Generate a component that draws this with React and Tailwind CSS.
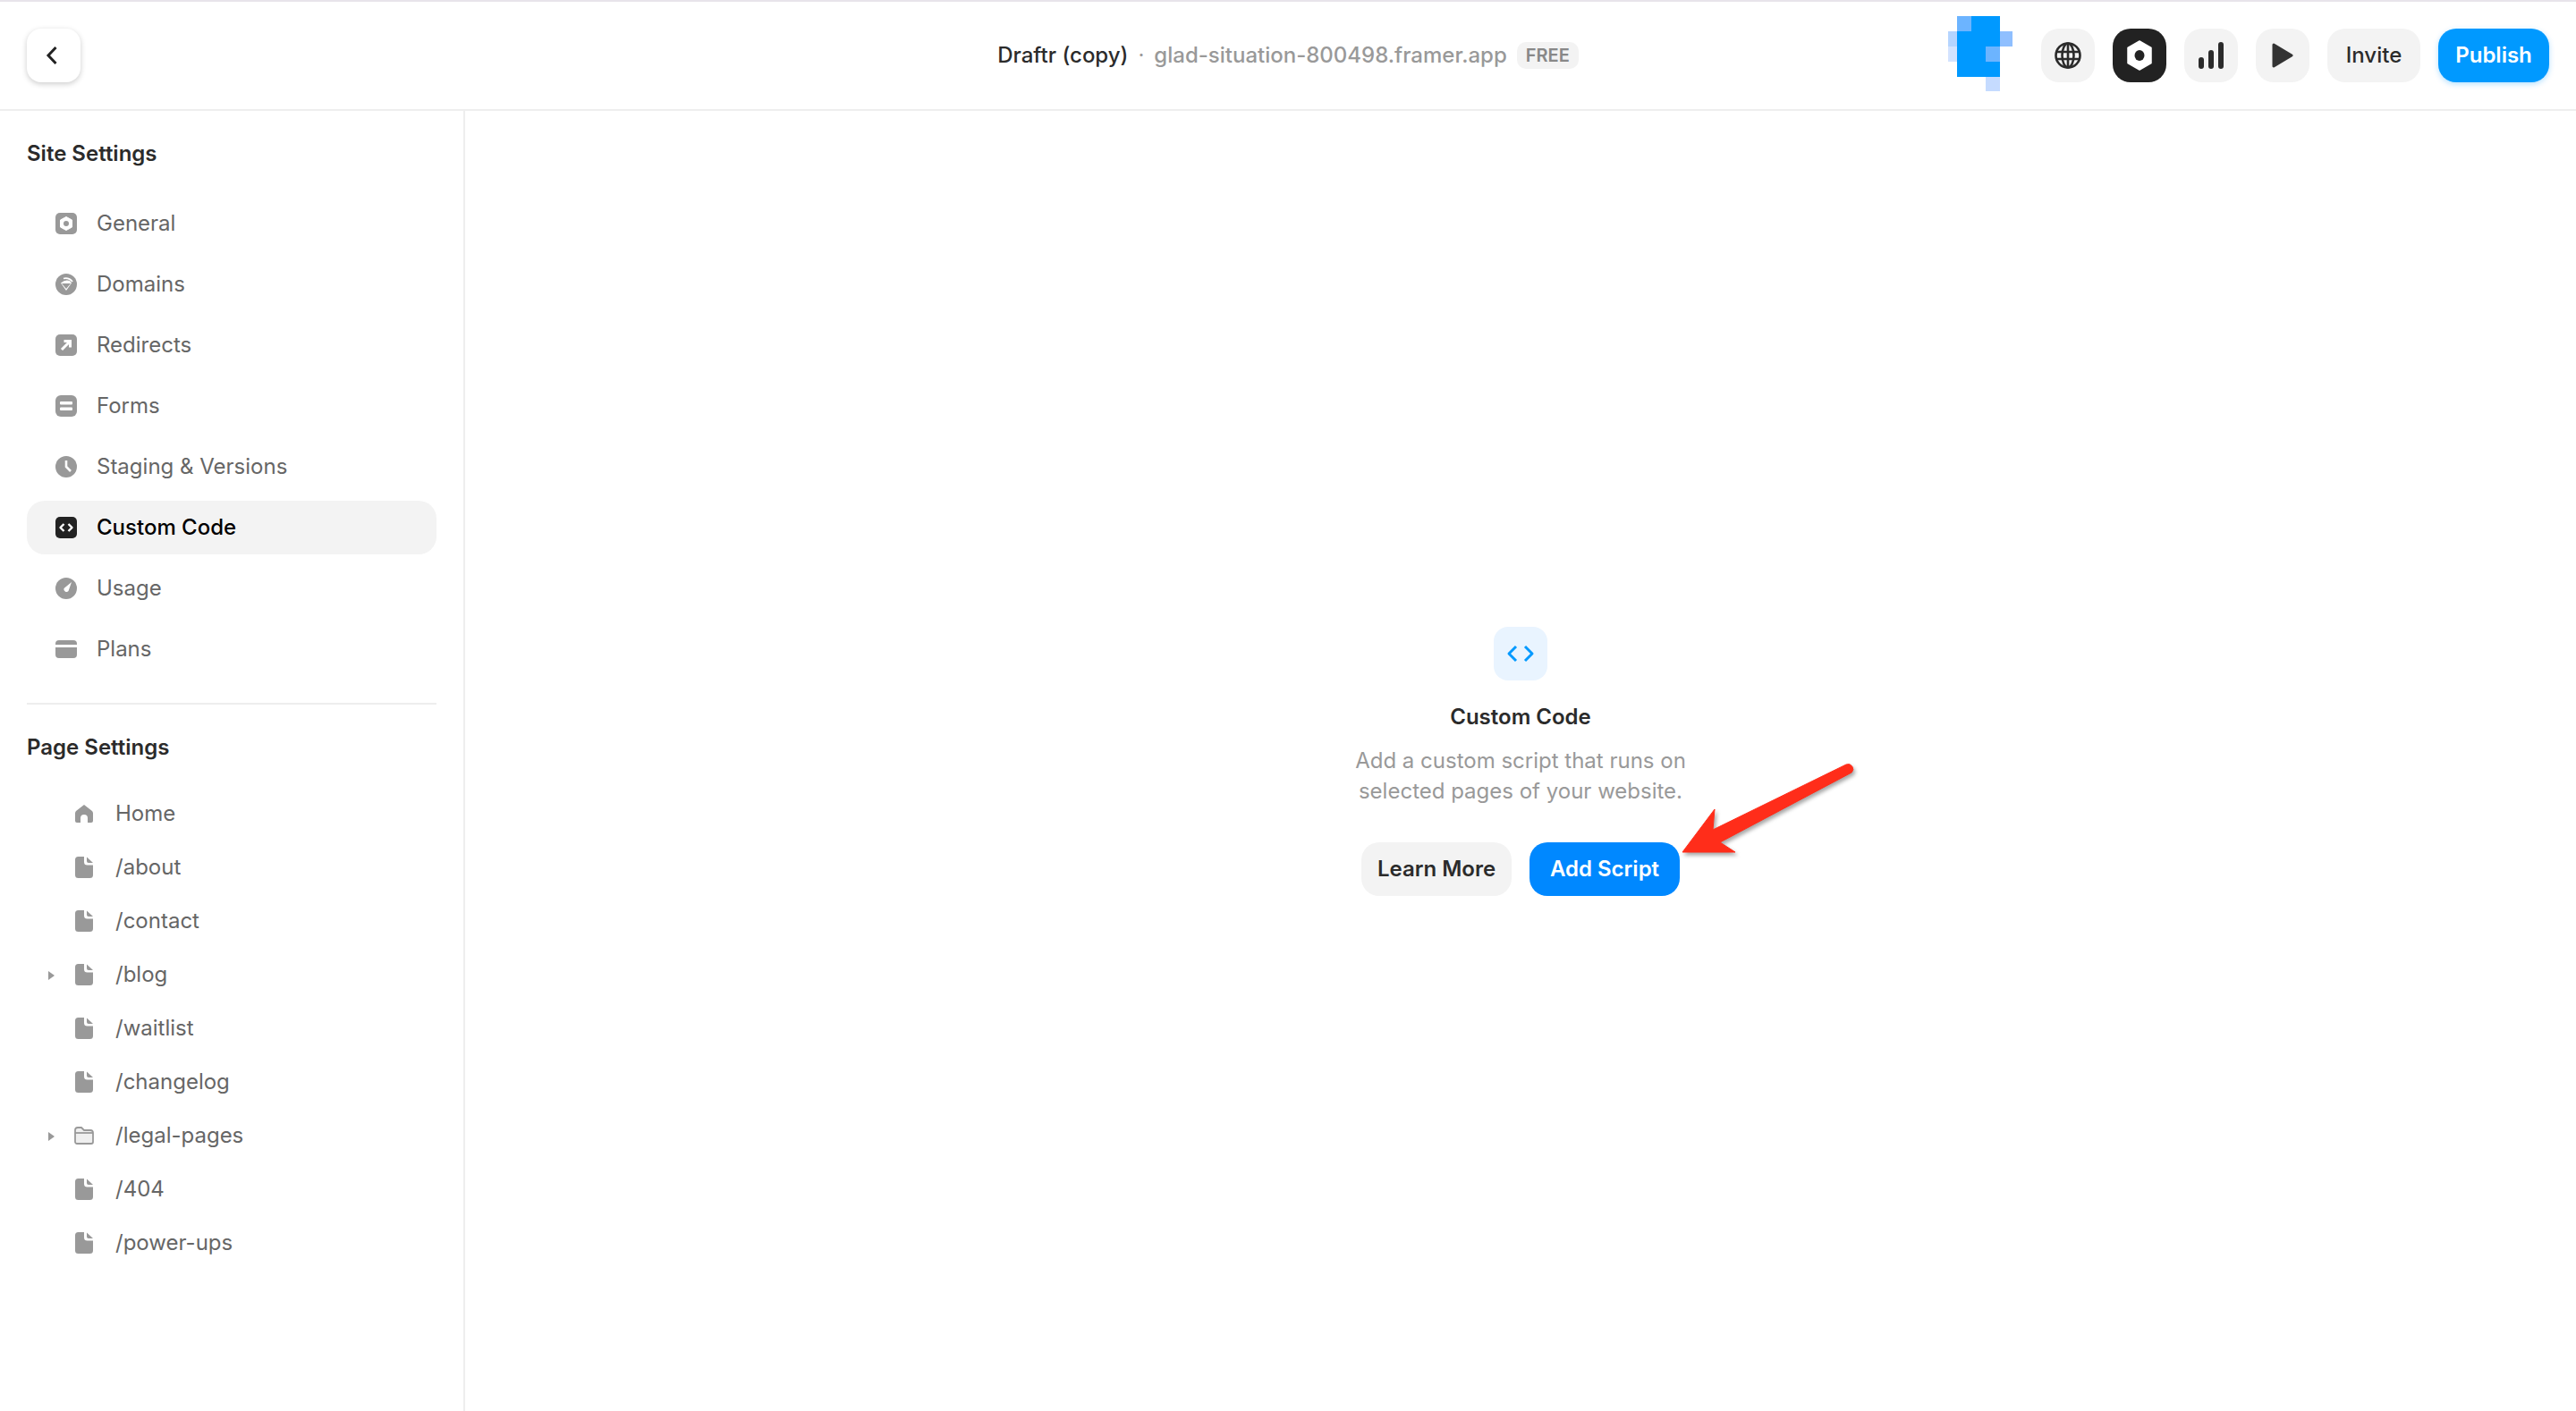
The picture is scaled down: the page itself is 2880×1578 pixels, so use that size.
import React from "react";

const Gray = "#999999";

const SiteIcon = ({ name, active }) => {
  const c = active ? "#222222" : Gray;
  const common = { width: 24, height: 24, viewBox: "0 0 24 24", className: "shrink-0" };
  switch (name) {
    case "general":
      return (
        <svg {...common}>
          <rect width="24" height="24" rx="5" fill={c} />
          <path d="M12 4.5 18.5 8v8L12 19.5 5.500 16V8Z" fill="#fff" stroke="#fff" strokeWidth="1" strokeLinejoin="round" />
          <circle cx="12" cy="12" r="3" fill={c} />
        </svg>
      );
    case "domains":
      return (
        <svg {...common}>
          <circle cx="12" cy="12" r="12" fill={c} />
          <path d="M6 10.500 12 19l6-8.500-2-2.500Q11 6 6 10.500Z" fill="#fff" />
          <path d="M9 5.500Q15 4 19 9" stroke="#fff" strokeWidth="1.800" fill="none" />
          <path d="M7 11h10l-5 6Z" fill={c} />
        </svg>
      );
    case "redirects":
      return (
        <svg {...common}>
          <rect width="24" height="24" rx="5" fill={c} />
          <path d="M7 17 16 8M9.500 7.500H16.500V14.500" stroke="#fff" strokeWidth="3" fill="none" />
        </svg>
      );
    case "forms":
      return (
        <svg {...common}>
          <rect width="24" height="24" rx="6" fill={c} />
          <rect x="5" y="7" width="14" height="3.500" rx="1" fill="#fff" />
          <rect x="5" y="13.500" width="14" height="3.500" rx="1" fill="#fff" />
        </svg>
      );
    case "staging":
      return (
        <svg {...common}>
          <circle cx="12" cy="12" r="12" fill={c} />
          <path d="M12 5v7l5 5" stroke="#fff" strokeWidth="2.600" fill="none" />
        </svg>
      );
    case "code":
      return (
        <svg {...common}>
          <rect width="24" height="24" rx="5" fill={c} />
          <path d="M9.500 8 5.500 12l4 4M14.500 8l4 4-4 4" stroke="#fff" strokeWidth="2.400" fill="none" strokeLinejoin="round" />
        </svg>
      );
    case "usage":
      return (
        <svg {...common}>
          <circle cx="12" cy="12" r="12" fill={c} />
          <path d="M18 5 14.500 15a3 3 0 0 1-5-3Z" fill="#fff" />
        </svg>
      );
    default:
      return (
        <svg {...common}>
          <path d="M0 6a4 4 0 0 1 4-4h16a4 4 0 0 1 4 4v1H0Z" fill={c} />
          <path d="M0 10h24v8a4 4 0 0 1-4 4H4a4 4 0 0 1-4-4Z" fill={c} />
        </svg>
      );
  }
};

const PageIcon = ({ type }) => {
  if (type === "home")
    return (
      <svg width="20" height="20" viewBox="0 0 20 20" className="shrink-0">
        <path d="M10 0 19 7q1 1 1 2.500V18a2 2 0 0 1-2 2h-4v-5a4 4 0 0 0-8 0v5H2a2 2 0 0 1-2-2V9.500Q0 8 1 7Z" fill={Gray} />
      </svg>
    );
  if (type === "folder")
    return (
      <svg width="22" height="20" viewBox="0 0 22 20" className="shrink-0 -mx-px">
        <path d="M1 17V4a3 3 0 0 1 3-3h4l3 3h7a3 3 0 0 1 3 3v10a2 2 0 0 1-2 2H3a2 2 0 0 1-2-2Z" fill="#efefef" stroke={Gray} strokeWidth="1.800" />
        <path d="M1 7h20" stroke={Gray} strokeWidth="1.800" />
      </svg>
    );
  return (
    <svg width="20" height="24" viewBox="0 0 20 24" className="shrink-0">
      <path d="M3.500 0H10v6a3.500 3.500 0 0 0 3.500 3.500H20v11a3.500 3.500 0 0 1-3.500 3.500h-13A3.500 3.500 0 0 1 0 20.500v-17A3.500 3.500 0 0 1 3.500 0Z" fill={Gray} />
      <path d="M13 0.500 20 7h-5a2 2 0 0 1-2-2Z" fill={Gray} />
    </svg>
  );
};

const site = [
  ["general", "General"],
  ["domains", "Domains"],
  ["redirects", "Redirects"],
  ["forms", "Forms"],
  ["staging", "Staging & Versions"],
  ["code", "Custom Code", true],
  ["usage", "Usage"],
  ["plans", "Plans"],
];

const pages = [
  ["home", "Home"],
  ["page", "/about"],
  ["page", "/contact"],
  ["page", "/blog", true],
  ["page", "/waitlist"],
  ["page", "/changelog"],
  ["folder", "/legal-pages", true],
  ["page", "/404"],
  ["page", "/power-ups"],
];

const Logo = () => (
  <svg width="72" height="84" viewBox="0 0 72 84" className="shrink-0 mr-3 -mt-1">
    <rect x="10" y="0" width="16" height="17" fill="#6cb4ff" />
    <rect x="26" y="0" width="32" height="17" fill="#0099ff" />
    <rect x="0" y="17" width="10" height="17" fill="#b5d4ff" />
    <rect x="10" y="17" width="48" height="17" fill="#0099ff" />
    <rect x="58" y="17" width="14" height="17" fill="#8fbfff" />
    <rect x="0" y="34" width="10" height="17" fill="#d3e3ff" />
    <rect x="10" y="34" width="32" height="17" fill="#0099ff" />
    <rect x="42" y="34" width="16" height="17" fill="#6cb4ff" />
    <rect x="10" y="51" width="48" height="17" fill="#0099ff" />
    <rect x="42" y="68" width="16" height="16" fill="#c5dbff" />
  </svg>
);

const IconBtn = ({ dark, children }) => (
  <div className={`w-[60px] h-[60px] rounded-[20px] flex items-center justify-center ${dark ? "bg-[#222222]" : "bg-[#f3f3f3]"}`}>
    {children}
  </div>
);

export default function App() {
  return (
    <div
      className="relative w-[2880px] h-[1578px] bg-white flex flex-col overflow-hidden"
      style={{ fontFamily: "Inter, 'Liberation Sans', sans-serif" }}
    >
      <div className="h-[2px] bg-[#e8e4ea] shrink-0" />
      <header className="h-[122px] shrink-0 border-b-2 border-[#eeeeee] grid grid-cols-[1fr_auto_1fr] items-center px-[30px]">
        <div>
          <button className="w-[60px] h-[60px] rounded-[16px] bg-white shadow-[0_2px_6px_rgba(0,0,0,0.2)] flex items-center justify-center">
            <svg width="14" height="22" viewBox="0 0 14 22" className="-ml-1">
              <path d="M11.500 2 3 11l8.500 9" stroke="#222" strokeWidth="3" fill="none" />
            </svg>
          </button>
        </div>
        <div className="flex items-center text-[24px]">
          <span className="text-[#2b2b2b] font-medium">Draftr (copy)</span>
          <span className="text-[#999999] mx-[11px]">·</span>
          <span className="text-[#999999] font-medium">glad-situation-800498.framer.app</span>
          <span className="ml-[11px] h-[30px] px-[10px] rounded-[10px] bg-[#f3f3f3] text-[#888888] text-[20px] font-semibold flex items-center">FREE</span>
        </div>
        <div className="flex items-center justify-end gap-5">
          <Logo />
          <IconBtn>
            <svg width="30" height="30" viewBox="0 0 30 30" fill="none" stroke="#2b2b2b" strokeWidth="2.600">
              <circle cx="15" cy="15" r="13.500" />
              <ellipse cx="15" cy="15" rx="6.500" ry="13.500" />
              <path d="M1.500 11h27M1.500 19h27M15 1.500v27" />
            </svg>
          </IconBtn>
          <IconBtn dark>
            <svg width="28" height="34" viewBox="0 0 28 34">
              <path d="M14 1 27 8.500v17L14 33 1 25.500v-17Z" fill="#fff" stroke="#fff" strokeWidth="1.500" strokeLinejoin="round" />
              <ellipse cx="14" cy="17" rx="5.500" ry="6" fill="#222" />
            </svg>
          </IconBtn>
          <IconBtn>
            <svg width="28" height="30" viewBox="0 0 28 30" fill="#2b2b2b">
              <rect x="0" y="17" width="6" height="13" rx="3" />
              <rect x="11" y="9" width="6" height="21" rx="3" />
              <rect x="22" y="0" width="6" height="30" rx="3" />
            </svg>
          </IconBtn>
          <IconBtn>
            <svg width="24" height="28" viewBox="0 0 24 28">
              <path d="M2 2 22 14 2 26Z" fill="#333" stroke="#333" strokeWidth="3" strokeLinejoin="round" />
            </svg>
          </IconBtn>
          <div className="h-[60px] w-[104px] rounded-[20px] bg-[#f3f3f3] flex items-center justify-center text-[24px] font-medium text-[#2b2b2b]">Invite</div>
          <div className="h-[60px] w-[124px] rounded-[20px] bg-[#0099ff] flex items-center justify-center text-[24px] font-semibold text-white shadow-[0_2px_6px_rgba(0,153,255,0.3)]">Publish</div>
        </div>
      </header>
      <div className="flex flex-1 min-h-0">
        <aside className="w-[520px] shrink-0 border-r-2 border-[#eeeeee] px-[30px] pt-[28px]">
          <h2 className="h-[40px] flex items-center text-[24px] font-semibold text-[#2b2b2b]">Site Settings</h2>
          <div className="mt-[28px] w-[458px] flex flex-col gap-2">
            {site.map(([k, label, active]) => (
              <div key={k} className={`h-[60px] rounded-[20px] pl-[32px] flex items-center gap-[22px] text-[24px] ${active ? "bg-[#f3f3f3] text-black font-medium" : "text-[#666666]"}`}>
                <SiteIcon name={k} active={active} />
                <span>{label}</span>
              </div>
            ))}
          </div>
          <div className="w-[458px] h-[2px] bg-[#eeeeee] mt-[30px]" />
          <h2 className="mt-[28px] h-[40px] flex items-center text-[24px] font-semibold text-[#2b2b2b]">Page Settings</h2>
          <div className="mt-[24px] flex flex-col">
            {pages.map(([type, label, caret]) => (
              <div key={label} className="relative h-[60px] pl-[54px] flex items-center gap-[25px] text-[24px] text-[#666666]">
                {caret && <span className="absolute left-[24px] top-[26px] w-0 h-0 border-y-[5px] border-y-transparent border-l-[7px] border-l-[#999999]" />}
                <PageIcon type={type} />
                <span>{label}</span>
              </div>
            ))}
          </div>
        </aside>
        <main className="flex-1 flex flex-col items-center justify-center">
          <div className="w-[60px] h-[60px] rounded-[16px] bg-[#e9f4ff] flex items-center justify-center">
            <svg width="32" height="20" viewBox="0 0 32 20" fill="none" stroke="#0099ff" strokeWidth="3" strokeLinejoin="round">
              <path d="M11 2 3 10l8 8M21 2l8 8-8 8" />
            </svg>
          </div>
          <h1 className="mt-[24px] text-[24px] leading-[34px] font-semibold text-[#2b2b2b]">Custom Code</h1>
          <p className="mt-[15px] text-[24px] leading-[34px] text-[#999999] text-center w-[420px]">Add a custom script that runs on selected pages of your website.</p>
          <div className="mt-[40px] flex gap-5">
            <div className="w-[168px] h-[60px] rounded-[20px] bg-[#f3f3f3] flex items-center justify-center text-[24px] font-semibold text-[#2b2b2b]">Learn More</div>
            <div className="w-[168px] h-[60px] rounded-[20px] bg-[#0088ff] flex items-center justify-center text-[24px] font-semibold text-white">Add Script</div>
          </div>
        </main>
      </div>
      <svg className="absolute left-[1870px] top-[845px]" width="215" height="120" viewBox="0 0 215 120">
        <path
          d="M11 108 47 60 45 83 194 10a5.500 5.500 0 0 1 6 9L53 97 70 108Z"
          fill="#ff2d1a"
          stroke="#ff2d1a"
          strokeWidth="1"
          style={{ filter: "drop-shadow(2px 3px 2px rgba(0,0,0,0.35))" }}
        />
      </svg>
    </div>
  );
}
